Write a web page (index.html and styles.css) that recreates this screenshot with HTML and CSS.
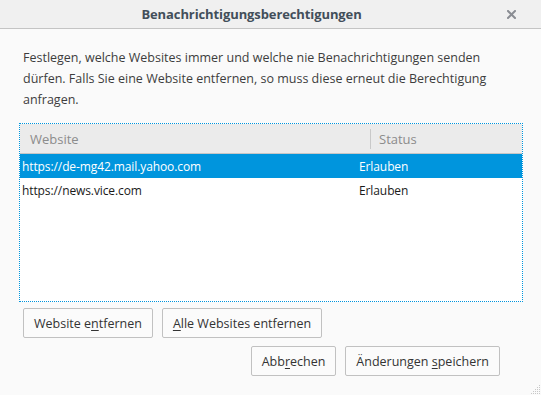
FILE: index.html
```html
<!DOCTYPE html>
<html>
<head>
	<meta charset="utf-8">
	<title>Benachrichtigungsberechtigungen</title>
	<link rel="stylesheet" href="styles.css">
</head>
<body>
	<div class="dialog">
		<div class="titlebar">
			<span class="title">Benachrichtigungsberechtigungen</span>
			<button class="close" title="Schließen">
				<svg width="9" height="9" viewBox="0 0 9 9">
					<path d="M1 1 L8 8 M8 1 L1 8" stroke="#8a8d93" stroke-width="2" stroke-linecap="square"/>
				</svg>
			</button>
		</div>

		<div class="content">
			<p class="desc">Festlegen, welche Websites immer und welche nie Benachrichtigungen senden dürfen. Falls Sie eine Website entfernen, so muss diese erneut die Berechtigung anfragen.</p>

			<div class="tree">
				<div class="tree_head">
					<div class="col_site">Website</div>
					<div class="col_status">Status</div>
				</div>
				<div class="row selected">
					<div class="cell_site">https://de-mg42.mail.yahoo.com</div>
					<div class="cell_status">Erlauben</div>
				</div>
				<div class="row">
					<div class="cell_site">https://news.vice.com</div>
					<div class="cell_status">Erlauben</div>
				</div>
			</div>

			<div class="actions">
				<button class="btn">Website e<u>n</u>tfernen</button>
				<button class="btn"><u>A</u>lle Websites entfernen</button>
			</div>

			<div class="footer">
				<button class="btn">Abb<u>r</u>echen</button>
				<button class="btn">Änderungen <u>s</u>peichern</button>
			</div>
		</div>

		<svg class="grip" width="12" height="12" viewBox="0 0 12 12">
			<g fill="#c8c8c8">
				<rect x="10" y="2" width="1" height="1"/>
				<rect x="8" y="4" width="1" height="1"/>
				<rect x="10" y="4" width="1" height="1"/>
				<rect x="6" y="6" width="1" height="1"/>
				<rect x="8" y="6" width="1" height="1"/>
				<rect x="10" y="6" width="1" height="1"/>
				<rect x="4" y="8" width="1" height="1"/>
				<rect x="6" y="8" width="1" height="1"/>
				<rect x="8" y="8" width="1" height="1"/>
				<rect x="10" y="8" width="1" height="1"/>
				<rect x="2" y="10" width="1" height="1"/>
				<rect x="4" y="10" width="1" height="1"/>
				<rect x="6" y="10" width="1" height="1"/>
				<rect x="8" y="10" width="1" height="1"/>
				<rect x="10" y="10" width="1" height="1"/>
			</g>
		</svg>
	</div>
</body>
</html>
```

FILE: styles.css
```css
body {
	margin: 0;
	background-color: #fafafa;
	font-family: "Open Sans", "Noto Sans", sans-serif;
	font-size: 12px;
	color: #3d3d3d;
}

.dialog {
	position: relative;
	width: 541px;
	height: 395px;
	overflow: hidden;
}

.titlebar {
	height: 28px;
	background-color: #f0f0f0;
	border-bottom: 1px solid #c4c4c4;
	display: flex;
	align-items: center;
	justify-content: center;
	padding-right: 38px;
	position: relative;
}

.title {
	font-weight: bold;
	font-size: 13px;
	color: #424e5a;
	letter-spacing: -0.1px;
}

.close {
	position: absolute;
	right: 25px;
	top: 10px;
	border: none;
	background: none;
	padding: 0;
	width: 9px;
	height: 9px;
	display: flex;
}

.content {
	padding: 18px 19px 0 19px;
}

.desc {
	margin: 0 0 13px 4px;
	font-size: 12.5px;
	line-height: 21px;
	width: 490px;
}

.tree {
	width: 502px;
	height: 177px;
	border: 1px dotted #0095dd;
	background-color: #fff;
}

.tree_head {
	height: 29px;
	background-color: #ebebeb;
	border-bottom: 1px solid #c6c6c6;
	display: flex;
	align-items: center;
	font-size: 13px;
	color: #8c8c8c;
}

.col_site {
	width: 340px;
	padding-left: 10px;
	border-right: 1px solid #c9c9c9;
	line-height: 20px;
}

.col_status {
	padding-left: 8px;
}

.row {
	height: 24px;
	display: flex;
	align-items: center;
	color: #1a1a1a;
	letter-spacing: -0.1px;
}

.row.selected {
	background-color: #0095dd;
	color: #fff;
}

.cell_site {
	width: 337px;
	padding-left: 2px;
}

.actions {
	display: flex;
	gap: 9px;
	margin: 6px 0 0 4px;
}

.footer {
	display: flex;
	justify-content: flex-end;
	gap: 9px;
	margin: 8px 22px 0 0;
}

.btn {
	height: 30px;
	padding: 0 10px;
	border: 1px solid #c1c1c1;
	border-radius: 2px;
	background-color: #fbfbfb;
	font-family: "Open Sans", "Noto Sans", sans-serif;
	font-size: 12.5px;
	color: #333;
}

.btn u {
	text-underline-offset: 2px;
}

.grip {
	position: absolute;
	right: 0;
	bottom: 0;
}
```
